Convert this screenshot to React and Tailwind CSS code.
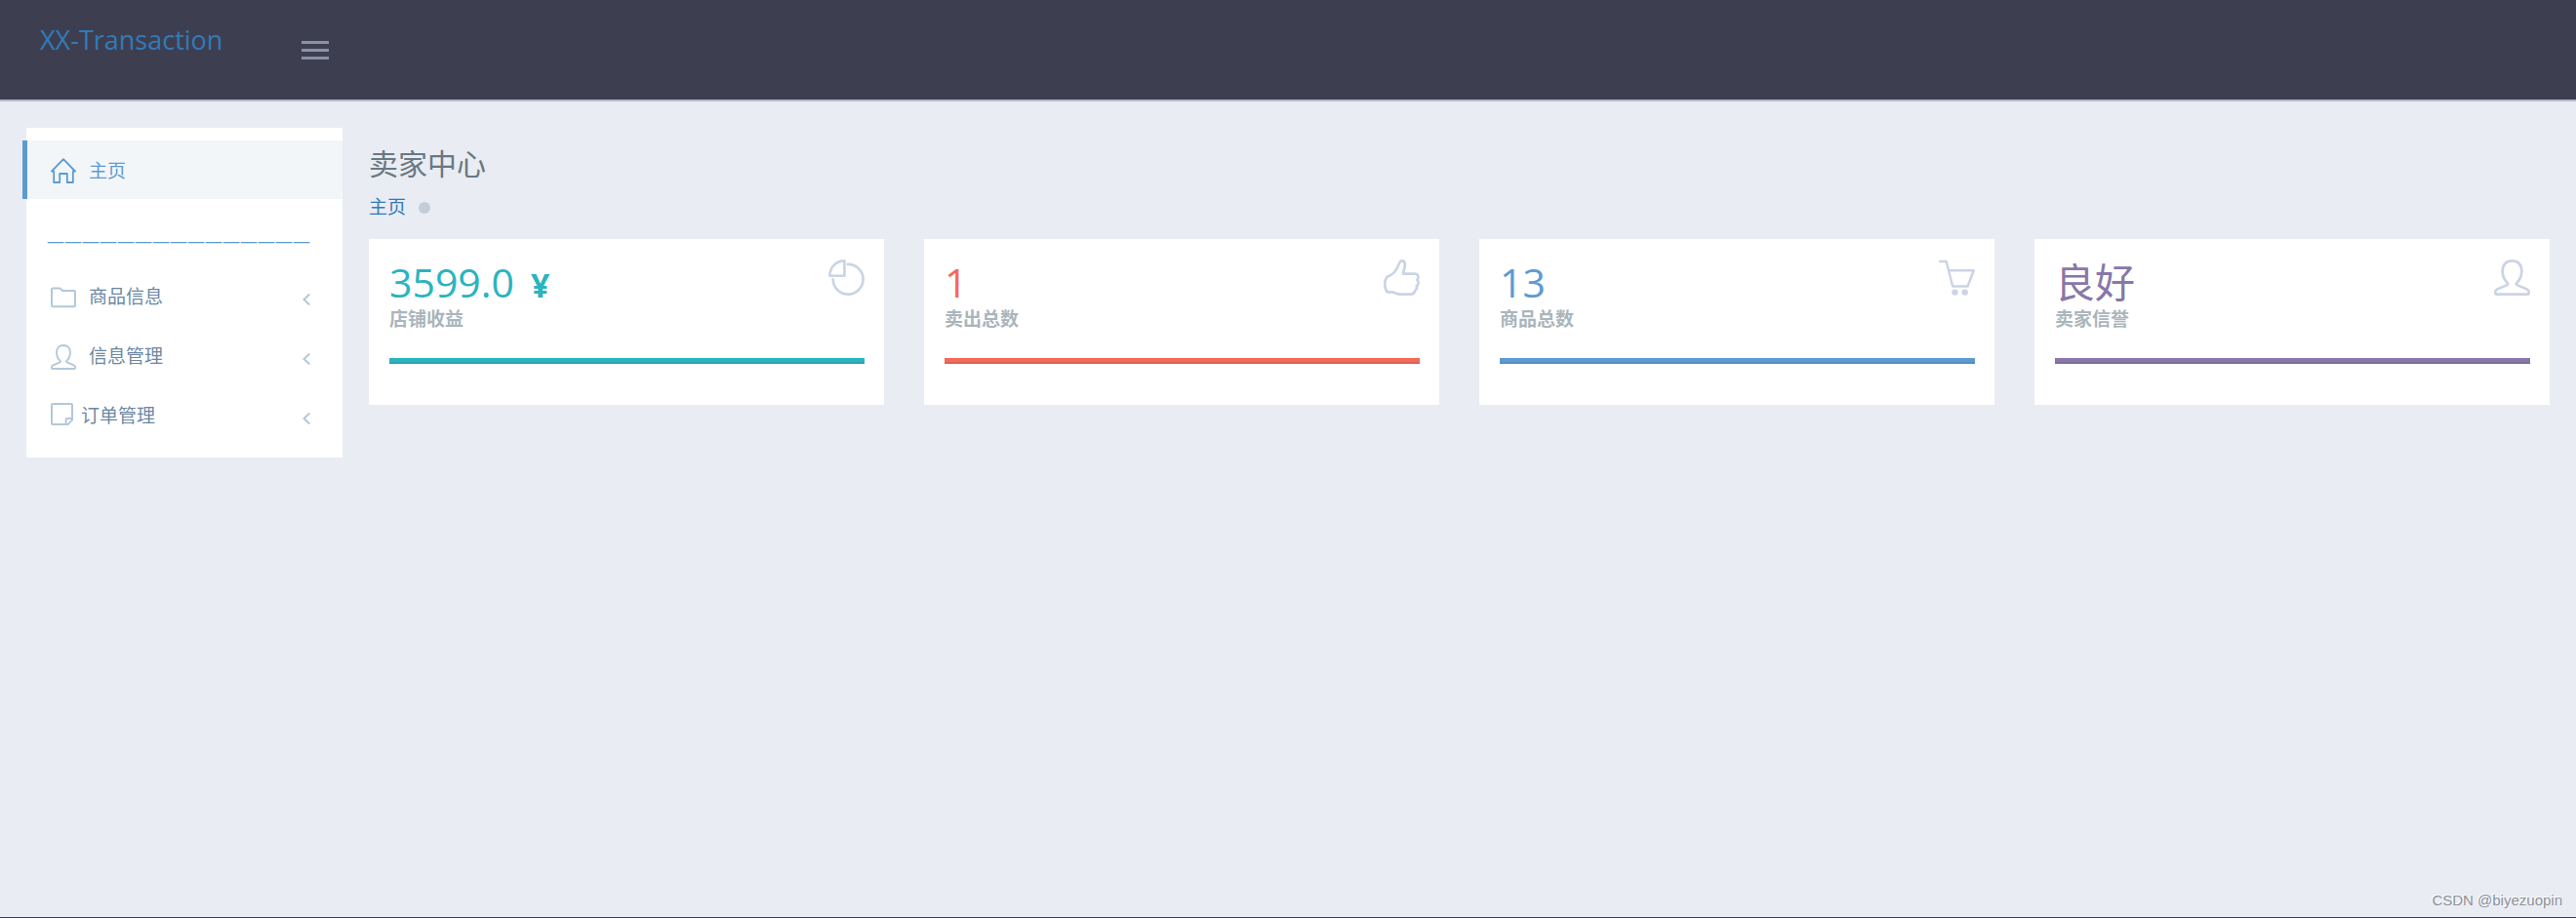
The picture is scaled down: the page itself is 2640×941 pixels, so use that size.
const menu = [
  { label: '商品信息', icon: <FolderIcon />, gap: 'gap-[13px]' },
  { label: '信息管理', icon: <UserIcon className="size-[26px]" />, gap: 'gap-[13px]' },
  { label: '订单管理', icon: <NoteIcon />, gap: 'gap-2' },
];

const stats = [
  { label: '店铺收益', value: '3599.0', unit: '¥', text: 'text-[#2ab4c0]', bar: 'border-[#29a5b0] bg-[#2ab4c0]', icon: <PieIcon /> },
  { label: '卖出总数', value: '1', text: 'text-[#f36a5a]', bar: 'border-[#dd6355] bg-[#f36a5a]', icon: <LikeIcon /> },
  { label: '商品总数', value: '13', text: 'text-[#5c9bd1]', bar: 'border-[#558fc0] bg-[#5c9bd1]', icon: <CartIcon /> },
  { label: '卖家信誉', value: '良好', text: 'text-[#8877a9]', bar: 'border-[#7d6f9c] bg-[#8877a9]', icon: <UserIcon className="size-[37px]" /> },
];

function HomeIcon() {
  return (
    <svg viewBox="0 0 26 26" className="size-[26px]" fill="none" stroke="currentColor" strokeWidth="1.8" strokeLinejoin="round" strokeLinecap="round">
      <path d="M1 13.5 13 1.2l12 12.3h-2.2V25h-6v-9h-7.6v9h-6V13.5z" />
    </svg>
  );
}

function FolderIcon() {
  return (
    <svg viewBox="0 0 26 26" className="size-[26px]" fill="none" stroke="currentColor" strokeWidth="2" strokeLinejoin="round">
      <path d="M1 4.500Q1 3.500 2 3.500H9.500L12 6H24Q25 6 25 7V21.300Q25 22.300 24 22.300H2Q1 22.300 1 21.300z" />
    </svg>
  );
}

function UserIcon({ className }) {
  return (
    <svg viewBox="0 0 36 36" className={className} fill="none" stroke="currentColor" strokeWidth="2.6" strokeLinejoin="round">
      <path d="M18 1.300c-6 0-9.600 4.200-9.600 10 0 5.600 2 9.400 5 12 .7.700.6 1.600-.4 2.100L2.600 30Q1.300 30.700 1.300 32.200v1.500Q1.300 34.700 2.300 34.700h31.400Q34.700 34.700 34.700 33.700v-1.500Q34.700 30.700 33.400 30L23 25.400c-1-.5-1.100-1.400-.4-2.100 3-2.600 5-6.400 5-12 0-5.800-3.600-10-9.600-10z" />
    </svg>
  );
}

function NoteIcon() {
  return (
    <svg viewBox="0 0 23 23" className="mb-1 size-[23px]" fill="none" stroke="currentColor" strokeWidth="2" strokeLinejoin="round">
      <path d="M1 2Q1 1 2 1H21Q22 1 22 2V17.500L17.500 22H2Q1 22 1 21zM22 16h-5.500q-.9 0-.9.900V22" />
    </svg>
  );
}

function PieIcon() {
  return (
    <svg viewBox="0 0 36 36" className="size-[37px]" fill="none" stroke="currentColor" strokeWidth="2.6" strokeLinejoin="round" strokeLinecap="round">
      <path d="M16 1.300v15H1.300C1.300 8 7.500 1.300 16 1.300z" />
      <path d="M19.200 4.700a15 15 0 1 1-14.600 15" />
    </svg>
  );
}

function LikeIcon() {
  return (
    <svg viewBox="0 0 36 36" className="size-[37px]" fill="none" stroke="currentColor" strokeWidth="2.6" strokeLinejoin="round" strokeLinecap="round">
      <path d="M3.500 17.200C9 16 13 10.500 15.300 4.500 16.200 2 17.200 1.300 18.300 1.300c2 0 3 1.700 3 4 0 3.200-1.700 5.500-1.700 9H31c3.500 0 4.500 3.500 2.400 6 2 2.300 1.600 4.600-.6 6 .8 2 0 3.700-1.500 4.600-.3 2.500-2 3.800-4.800 3.800H17c-5 0-6-2.300-9-2.300H3.500C.6 27.500.6 21.500 3.500 17.200z" />
    </svg>
  );
}

function CartIcon() {
  return (
    <svg viewBox="0 0 36 36" className="size-[37px]" fill="none" stroke="currentColor" strokeWidth="2.4" strokeLinejoin="round" strokeLinecap="round">
      <path d="M1.200 2h6.300l6.300 24.800h15L34.800 11H10" />
      <circle cx="16" cy="32.700" r="3.100" fill="currentColor" stroke="none" />
      <circle cx="26" cy="32.700" r="3.100" fill="currentColor" stroke="none" />
    </svg>
  );
}

function ArrowIcon() {
  return (
    <svg viewBox="0 0 8 12" className="mt-1 h-3 w-2" fill="none" stroke="currentColor" strokeWidth="2">
      <path d="M7.300.5 1.500 6l5.800 5.500" />
    </svg>
  );
}

export default function App() {
  return (
    <div className="flex min-h-screen flex-col border-b border-[#3d3f51] bg-[#e9ecf3] font-['Open_Sans','Noto_Sans_CJK_SC',sans-serif] text-[19px]">
      <header className="flex h-[104px] items-start border-b-2 border-[#b4b8c8] bg-[#3d3f51]">
        <a href="#" className="ml-[41px] mt-[23px] w-[268px] text-[27px] leading-9 text-[#337ab7]">XX-Transaction</a>
        <button type="button" aria-label="menu" className="mt-[42px] flex w-7 flex-col gap-[5px]">
          <span className="h-[3px] w-full bg-[#8b91a3]" />
          <span className="h-[3px] w-full bg-[#8b91a3]" />
          <span className="h-[3px] w-full bg-[#8b91a3]" />
        </button>
      </header>

      <div className="flex flex-1 items-start gap-[27px] px-[27px] pt-[27px]">
        <nav className="w-[324px] shrink-0 bg-white pt-[13px] pb-3 text-[#6b88a3]">
          <a href="#" className="-ml-1 flex h-[60px] items-center gap-[13px] border-l-[5px] border-[#5c9bd1] bg-[#f2f6f9] pt-0.5 pl-6 text-[#5c9bd1]">
            <HomeIcon />
            主页
          </a>
          <a href="#" className="block h-[70px] pt-[31px] pl-[21px] text-[18px] leading-6 text-[#5c9bd1]">———————————————</a>
          {menu.map((item) => (
            <a href="#" key={item.label} className={`flex h-[61px] items-center pr-[33px] pl-[25px] ${item.gap}`}>
              <span className="text-[#b4c8d8]">{item.icon}</span>
              {item.label}
              <span className="ml-auto text-[#b4c8d8]"><ArrowIcon /></span>
            </a>
          ))}
        </nav>

        <main className="min-w-0 flex-1">
          <h1 className="mt-[15px] text-[30px] leading-[44px] text-[#697882]">卖家中心</h1>
          <div className="mt-2 flex h-7 items-center gap-[13px]">
            <a href="#" className="text-[#337ab7]">主页</a>
            <span className="mt-0.5 size-3 rounded-full bg-[#c5ccd8]" />
          </div>
          <div className="mt-[19px] grid grid-cols-4 gap-[41px]">
            {stats.map((stat) => (
              <section key={stat.label} className="h-[170px] bg-white pt-[21px] pr-5 pl-[21px]">
                <div className="flex h-[74px] items-start justify-between">
                  <div>
                    <div className={`flex h-[49px] items-baseline gap-[17px] text-[41px] leading-[47px] ${stat.text}`}>
                      {stat.value}
                      {stat.unit && <span className="text-[34px] font-bold">{stat.unit}</span>}
                    </div>
                    <div className="leading-6 font-bold text-[#aab5bc]">{stat.label}</div>
                  </div>
                  <span className="text-[#cbd4e4]">{stat.icon}</span>
                </div>
                <div className={`mt-[27px] h-1.5 border-b-2 ${stat.bar}`} />
              </section>
            ))}
          </div>
        </main>
      </div>

      <footer className="pr-[14px] pb-[5px] text-right font-['Liberation_Sans',sans-serif] text-[15px] leading-6 text-[#8e9197] [text-shadow:-1px_-1px_0_#ffffff]">CSDN @biyezuopin</footer>
    </div>
  );
}
